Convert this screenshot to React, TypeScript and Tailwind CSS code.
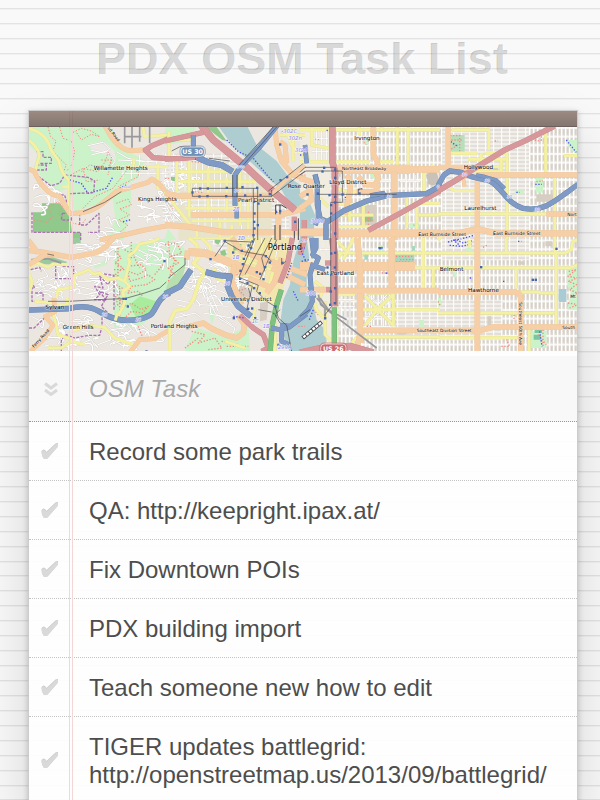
import React from 'react';

type Kind = 'orange' | 'yellow' | 'red' | 'blue' | 'green' | 'white' | 'rail' | 'line' | 'purple' | 'reddot' | 'bluedot';

const ink: Record<Kind, { color: string; casing?: string; dash?: string }> = {
  orange: { color: '#f6cfa6', casing: '#efc598' },
  yellow: { color: '#f4f1a4', casing: '#e3df9c' },
  red: { color: '#d6989b', casing: '#c9888c' },
  blue: { color: '#7f9bc5', casing: '#607ea8' },
  green: { color: '#7fc27f', casing: '#68ab6c' },
  white: { color: '#ffffff', casing: '#d5d1cb' },
  rail: { color: '#99999c' },
  line: { color: '#45464c' },
  purple: { color: '#aa74b0', dash: '9 4' },
  reddot: { color: '#f58a80', dash: '4 5' },
  bluedot: { color: '#4950ed', dash: '4 5' },
};

type Road = [Kind, number, string];
type Area = [string, string];
type Label = [number, number, string, number?, number?];
type Tile = { x: number; y: number; areas: Area[]; roads: Road[]; marks: number[][]; refs?: Label[]; labels: Label[] };

const mint = '#cbf2c9';
const wood = '#91c98d';
const water = '#adcdd0';
const block = '#d6cec2';

const tiles: Tile[] = [
  {
    x: -3,
    y: -6,
    areas: [
      [mint, 'M3 6H250L290 75 350 105 330 160 280 190 230 230 140 260 120 190 80 205 45 160 22 130 3 110Z'],
      [mint, 'M250 200L310 190 310 230 300 290 285 345H240L262 280Z'],
      ['#ebe8e4', 'M185 55L230 50 258 75 265 105 220 85 190 80Z'],
      ['#ebe8e4', 'M3 60L28 85 22 120 3 125Z'],
      [wood, 'M15 262H42V235H95L125 272 132 322H15ZM132 322H158V345H132Z'],
    ],
    roads: [
      ['white', 3, 'M180 62L225 52 245 72 228 84 190 76M190 90L235 78 262 108 245 130M270 105L420 112M285 120V160M310 110V170M335 90V155M360 95V155M385 85V165M405 80V190M280 145H420M265 80L300 100 350 110'],
      ['reddot', 3, 'M60 6L68 35 84 48 75 78 95 100 115 120 105 145M95 6L105 40 130 48 140 80 132 118 115 140M135 22L160 10 190 18 215 35 190 28 160 45 145 22M128 150L165 130 210 140 232 110 240 82 252 100 240 150M165 250L200 215 255 190 285 150 310 120 335 132 330 155 270 185M165 130L175 170 215 165M18 285L60 292 72 275 62 248 90 230 105 245 90 265 115 290 160 300 175 280M265 235L300 222 310 240 275 252 305 270 272 285 300 300 278 320 290 340M160 140L185 120 220 125M220 105L250 105 240 130'],
      ['bluedot', 4, 'M125 165L160 175 180 205 235 190 255 155M275 190L295 180M285 290L310 284'],
      ['purple', 4, 'M25 80H45V97H70V115H32M25 120H55V135H22M20 145L68 182 95 175 110 150 180 157 200 168 197 203 125 206M85 210H110L125 260M12 262V322H158V345M155 265V300L175 300 213 265V322H180M103 265H130V285H100Z'],
      ['yellow', 8, 'M3 10C35 20 55 35 64 60 68 85 85 90 92 108 98 135 110 155 122 165V262M3 45C28 65 40 90 30 105L22 138M345 6L350 35 420 30M300 125H420M390 118V195M318 100V125M125 185H103'],
      ['rail', 5, 'M290 6V55M312 6V68M335 6V50M290 35H340M365 6V55'],
      ['orange', 13, 'M230 0C250 40 270 68 300 76 325 80 340 72 352 76M0 132L18 138C40 185 65 212 95 214L125 265C170 268 200 255 232 228L265 200 360 172 372 162 395 178 420 210M215 345L300 327 350 315 420 302'],
      ['red', 14, 'M420 42L372 62 352 75 375 98 420 101'],
      ['line', 2, 'M165 260L230 232 280 200'],
    ],
    marks: [],
    refs: [[286, 190, '3000', 9]],
    labels: [[197, 135, 'Willamette Heights'], [330, 228, 'Kings Heights'], [238, 10, 'sd Road', 13, 52]],
  },
  {
    x: 408,
    y: -6,
    areas: [
      [mint, 'M0 6H95L60 50 0 60ZM205 6L250 6 200 60ZM8 310L35 345H0Z'],
      ['#e8e4cc', 'M55 110L180 110 270 160 320 215V345H40V240Z'],
      [water, 'M162 6H248L275 60 335 108 370 155 420 190V250L375 240 350 195 310 160 250 105 205 65Z'],
      [wood, 'M122 6H155L185 48 172 45ZM18 155H30V168H18Z'],
      [mint, 'M335 205L370 228 360 240 330 212Z'],
    ],
    roads: [
      ['white', 3, 'M15 65V185M32 90V190M60 110V200M78 110V200M95 115V200M112 115V200M130 115V200M148 120V200M166 130V200M184 145V200M225 165V260M240 150V260M255 150V260M270 165V345M60 225H265M60 240H265M80 285H270M100 215V310M120 215V310M140 215V310M160 215V310M180 215V310M230 280V345M250 280V345M0 225L25 265 50 290M5 245L30 300'],
      ['yellow', 8, 'M0 45H80M12 20V105M35 105V200M72 110V275M130 130V260M185 160V260M30 140H200M45 170H270M60 250H230M225 120V300M165 285V345M95 300V345M0 200L35 248 80 305M200 300V345M250 215V330M360 6L380 60 420 100M385 6V110M345 30H420'],
      ['orange', 13, 'M330 6L335 60 350 110 385 150 420 160M340 90L365 110 360 60 345 50'],
      ['orange', 16, 'M0 205L35 212H320M78 270H345L420 250M0 300L70 305 180 322H420M340 280V345'],
      ['yellow', 6, 'M70 340H280M80 288H260'],
      ['red', 20, 'M108 0L145 45 190 82 245 128 310 188 390 255'],
      ['red', 14, 'M0 48L115 22M0 102L55 100 110 95'],
      ['bluedot', 4, 'M185 45L220 80 265 100 310 155 325 170M90 102L115 106'],
      ['reddot', 3, 'M350 20L375 12M0 160H20M90 200L115 203M80 110L110 112M10 235L25 252'],
      ['blue', 13, 'M338 0L285 65 222 132 210 150V242M85 30V65'],
      ['blue', 17, 'M98 98L130 112 170 120 203 140'],
      ['blue', 11, 'M215 255V280'],
      ['orange', 10, 'M320 208L360 168 420 122'],
      ['line', 2, 'M340 0L228 128M330 0L220 122M203 150V215M216 150V215M82 190H278V345M82 190V214H320L420 138M310 198L415 115M265 190V345M320 195V215M20 78L45 65H75M132 100L195 108'],
      ['line', 3, 'M332 240H350L365 250M332 240V268M345 240V268M330 300V345M345 300V345M388 280V345M400 280V345'],
      ['red', 14, 'M388 275V318M418 285V345'],
    ],
    marks: [[105, 190], [128, 190], [185, 188], [232, 186], [276, 188], [82, 202], [103, 214], [127, 213], [183, 213], [240, 211], [286, 210], [314, 207], [267, 230], [280, 235], [268, 265], [267, 290], [278, 300], [268, 310], [345, 58], [346, 165], [333, 260], [345, 258], [390, 290], [225, 128], [366, 156], [265, 330]],
    refs: [[215, 130, '3020', 9], [355, 25, '302C'], [370, 45, '302n'], [390, 80, '30'], [203, 258, '28'], [218, 345, '2B'], [208, 200, '10', 12]],
    labels: [[219, 232, 'Pearl District']],
  },
  {
    x: 813,
    y: -6,
    areas: [
      [block, 'M70 210H88V258H66ZM180 240H230V300H180Z'],
      ['#f1ece0', 'M0 6H90V345H0Z'],
      [water, 'M0 215L30 235 45 270 40 345H0Z'],
      [wood, 'M190 265H218V290H190Z'],
      [mint, 'M328 295H358V308H328ZM195 45H205V60H195ZM200 130L235 130 245 165 215 160Z'],
      ['#c9c2b8', 'M378 150L392 138 412 144 416 165 402 182 385 178Z'],
    ],
    roads: [
      ['white', 3, 'M50 10V115M65 10V115M80 10V115M35 40H85M35 60H85M35 80H85M120 155V200M160 150V200M180 150V200M120 170H280M320 150V200M345 150V200M300 170H360'],
      ['reddot', 3, 'M12 75H30M45 42L60 45M195 270V295M205 260V300M190 285H220M193 52L200 60M285 98H298M4 150H20M270 195L290 188M340 300L355 302'],
      ['yellow', 8, 'M0 14H90M35 6V60L90 70M15 60L25 110M0 110H85M108 15H420M292 6V120M325 6V125M110 110H210M235 110H280M245 6V20M178 6V30M372 145V205M372 145L400 120M110 190L145 200 150 290M338 235H420M115 238H200M115 270H220M355 270H420M190 240V300M110 305H210M320 205V310M60 220L85 245M350 240V320M145 200H205'],
      ['orange', 15, 'M220 6V88L232 110V122M140 150L152 170 150 200 135 270M175 155L195 178 225 180 235 160 225 135M0 160L35 170 25 200 0 215M0 250L35 225 28 185M170 200H225L235 180'],
      ['orange', 26, 'M105 133H330'],
      ['orange', 18, 'M330 133H420M283 140V345'],
      ['orange', 21, 'M110 325H420M0 322H88'],
      ['red', 18, 'M97 0V110L105 140V345'],
      ['red', 14, 'M205 316L300 265 420 198'],
      ['blue', 14, 'M45 148L52 175V240L60 280 82 290 130 258 200 228 260 212 380 206 425 180M55 225V280L45 300M78 295V345'],
      ['blue', 12, 'M210 212L250 205 245 218M15 60L20 115M45 150L55 185'],
      ['line', 2, 'M0 142L15 127H107V345M0 150L18 138H127V232H92V345M50 208H290M175 208V192H188'],
      ['bluedot', 4, 'M0 90H10M80 15L86 20M175 195L185 190M136 215V225'],
    ],
    marks: [[72, 128], [67, 139], [105, 133], [105, 158], [127, 208], [88, 210], [105, 215], [22, 208], [105, 232], [93, 265], [105, 325], [93, 240], [178, 205], [53, 205]],
    refs: [[32, 293, '3008'], [2, 80, '24'], [260, 218, '30', 12], [410, 190, '0', 12]],
    labels: [[163, 45, 'Irvington'], [126, 136, 'Northeast Broadway', 13], [88, 177, 'Lloyd District'], [-37, 190, 'Rose Quarter'], [355, 332, 'East Burnside Street', 14]],
  },
  {
    x: 1227,
    y: -6,
    areas: [
      ['#b6dfbc', 'M36 30H80V80H36Z'],
      [mint, 'M383 45H420V88L398 75ZM293 158H315V203H293ZM230 196H258V208H230Z'],
      [block, 'M295 208H345V230H295ZM150 125H180V135H150Z'],
    ],
    roads: [
      ['reddot', 4, 'M36 32H60M40 45H75M65 30V80M40 72L60 60M295 170L315 168M310 25V50M290 45L305 48M170 48H180'],
      ['bluedot', 4, 'M38 50L60 65M385 45L415 82M292 178H312M235 202H245'],
      ['yellow', 8, 'M42 15H152V75M40 85H120M140 85H208M90 103H208M130 85V110M190 103V140H110M207 85V345M323 6V145M0 267H325M350 155V345M378 92H420M33 175L38 190 50 197H110M110 125H185M0 345L20 325'],
      ['orange', 14, 'M30 0V130M0 127H105M115 150H420M118 150V345'],
      ['orange', 14, 'M325 267H420'],
      ['orange', 17, 'M0 325H60L118 312 175 325H420'],
      ['orange', 10, 'M85 137L75 155 80 185'],
      ['blue', 14, 'M0 182L18 150 35 138 70 142 100 155 155 168C195 190 205 235 255 250 320 262 350 228 420 178'],
      ['blue', 9, 'M115 150L140 155 175 165 200 190'],
      ['red', 15, 'M0 198L50 168 110 130 200 75 260 48 350 3'],
      ['bluedot', 4, 'M75 340L105 332M50 345L70 342'],
    ],
    marks: [],
    refs: [[72, 152, '30', 12], [140, 170, '30', 12], [207, 218, '30', 12], [290, 258, '30', 12]],
    labels: [[77, 131, 'Hollywood'], [79, 256, 'Laurelhurst'], [165, 331, 'East Burnside Street', 14], [388, 272, 'Nort', 13]],
  },
  {
    x: -3,
    y: 333,
    areas: [
      ['#9bc9a0', 'M20 62L75 58 118 72 105 82 40 78ZM135 0H158V18H135Z'],
      [mint, 'M258 35L300 20 420 0V150L385 180 372 235 330 270H258ZM198 85L240 60 235 80 200 92Z'],
      ['#a9ec9d', 'M335 175L385 190 375 225 325 240 305 200Z'],
    ],
    roads: [
      ['white', 3, 'M10 100L45 90 60 115 30 125 50 145 15 150M85 85L120 90 125 120M140 30L190 25 220 40M150 75L180 85 220 75M270 120L250 140M325 15L380 10 410 25M330 35L370 55 345 75 400 80M320 50L355 70M150 130L190 130M150 145L195 155M145 165L210 175M25 170L40 155 70 160 100 175M290 255L320 285M10 235L40 250M130 250L180 250M225 250L250 275 290 270M210 320L250 305 280 320M150 320L190 305 200 325M340 260L365 280M155 235L190 228'],
      ['reddot', 4, 'M262 40L280 60 260 75 285 90 262 110 280 125M270 30V115M258 95H300M300 85L340 80 355 95 330 110 300 100 305 130 340 120 360 110 380 125 355 140 310 145 300 165 330 160 345 175M265 140L290 155 262 175 285 190 262 205M275 150V240M265 190L295 205 310 195 340 215 360 205 345 225 310 220 290 240M330 265L345 300 325 310M310 12V60L300 80M290 35L315 50 335 90M380 110L405 80'],
      ['purple', 4, 'M83 80V122H137V86H100M8 95L35 88 40 100M10 130L20 150H12V190H45V165H20M228 108L258 112 240 140 215 115 225 150 200 145 215 170 200 185 235 188 215 160 240 170 220 205 240 225M258 115V215M135 215L165 206 222 225V265L215 292H185L140 300M3 270H18L55 235M100 340V305L115 290 140 300'],
      ['yellow', 8, 'M3 90L25 74 60 88 75 78 120 80M3 108L12 130 5 160M85 180L90 155 135 148 140 112 165 103 182 95 195 108 215 105 240 125 270 120 290 130 300 90 305 70 300 60M300 55L320 40 335 18 375 10 395 0M290 130L305 145 285 160 290 195 275 225 262 247M75 225L85 265 90 290 135 305M130 280L180 262 230 268 260 300 320 322M60 330H100L130 310 170 320M20 190L75 195M118 180V200L70 205'],
      ['rail', 6, 'M10 65L60 62 100 75'],
      ['orange', 14, 'M3 38L40 42 130 58 205 44 235 25 255 0M3 80L35 60 60 45M0 6L30 45'],
      ['orange', 12, 'M78 180L80 222 52 235 75 262 50 300 8 340M305 345L335 305 380 302 425 275'],
      ['blue', 15, 'M0 216L120 212C170 200 195 208 222 225 270 255 330 252 365 232 385 220 385 180 425 165'],
      ['yellow', 7, 'M262 247L268 225'],
      ['line', 2, 'M60 190H120L230 184 290 182 350 165 395 150 415 132M58 48L78 52'],
    ],
    marks: [[286, 182], [293, 182], [299, 205], [409, 69], [355, 340]],
    refs: [[222, 235, '26', 12], [323, 250, '26', 12], [405, 180, '26', 12]],
    labels: [[52, 213, 'Sylvan'], [104, 274, 'Green Hills'], [368, 270, 'Portland Heights'], [18, 330, 'Ferry Road', 13, -48]],
  },
  {
    x: 408,
    y: 333,
    areas: [
      ['#f3e5ae', 'M185 0H385L375 90 340 190 280 170 190 100Z'],
      [mint, 'M0 0L55 25 65 60 30 140 0 170ZM130 215L155 220 140 260ZM100 270L180 300 250 260 255 340H60L80 290Z'],
      ['#b9dfae', 'M40 100L65 70 50 130 0 165 10 130Z'],
      [wood, 'M148 0L168 5 160 20 150 15ZM165 40L180 35 185 50 170 58ZM205 20L230 18 225 35 205 38Z'],
      [water, 'M405 0H430V345H375L345 260 355 185 375 140 385 70Z'],
      [block, 'M210 140L240 145 260 170 240 190 205 170ZM285 195L310 190 305 245 285 250Z'],
    ],
    roads: [
      ['white', 3, 'M60 85L100 90M70 65V110M85 60V120M60 120L90 125M45 150L75 165M30 185L80 195 110 150M35 200L75 210M50 140L95 160M130 150L160 220M115 150L150 225 200 260M110 180L160 180M105 200L190 205M115 225L200 240M140 150L180 165 200 190M30 240L90 225 110 240M25 260L60 245M160 240L210 270 205 285M190 215L215 245M45 225L70 235M120 130L110 165M20 290L50 270M100 255L150 270M130 75L160 90M120 30L140 50M290 0V40M250 10L235 60M270 10L250 70M310 65L295 120M335 40L325 100'],
      ['reddot', 4, 'M0 20L35 15 50 45 20 55 40 75 10 90 30 110M5 40L30 65 10 130M80 280L120 290 100 315 150 300 170 330 130 335M60 330L100 300M185 325H250M215 150L240 175M205 165L245 150M400 265H420M170 310L220 320M10 10L15 60M205 110H225'],
      ['yellow', 10, 'M72 0L95 20 100 60 85 75 120 105 105 125 85 185 65 212 30 218 15 250V340'],
      ['yellow', 8, 'M120 108L150 95 155 120 185 135 200 165 215 190M110 0L135 25 140 55M225 60L360 110M260 0L235 110M300 0L265 130M335 60L310 150M275 180L340 195M330 250V340M270 210L265 250M180 310L240 330'],
      ['orange', 22, 'M70 42L120 45 200 75 290 110M215 90L240 105M300 50L275 110'],
      ['orange', 15, 'M65 65L68 38M200 0L230 40 360 85 425 110M350 60L330 130 305 165M250 120L320 150M208 80L200 130 230 200M320 90L420 140M65 268L115 255 140 272 180 290 215 300 235 285 238 260 220 232'],
      ['red', 14, 'M382 0L368 75 345 135M225 232L265 270 295 290 310 330 290 340M420 0L405 50'],
      ['green', 14, 'M349 155L335 200 322 260 315 345'],
      ['blue', 16, 'M122 102L160 112 195 115 188 145 200 175 220 205 258 235M0 168L45 145 78 95'],
      ['blue', 13, 'M318 270L345 275 372 268 425 228M350 275V310L372 320M375 265L345 262'],
      ['line', 2, 'M150 55L182 8 258 12 255 25 240 55M175 8L230 40 300 52 320 70M270 0L222 118 280 142 275 160 305 190 330 205 340 240 365 262 380 340M300 0L240 110M320 0L290 60 300 100M335 5L285 125M222 130L262 145 245 215M250 150L262 190M10 120L60 80 60 60M350 60V80L362 70M345 215L330 230 345 255M280 215L320 222'],
      ['bluedot', 4, 'M365 120L380 75M325 225L335 235M400 30H420M205 235L240 240M385 160L400 190'],
    ],
    marks: [[136, 63], [179, 8], [204, 43], [230, 38], [250, 22], [258, 30], [262, 10], [236, 62], [226, 98], [285, 107], [295, 123], [275, 102], [302, 54], [314, 73], [233, 78], [331, 20], [352, 74], [300, 87], [225, 122], [267, 150], [247, 135], [284, 165], [249, 212], [261, 211], [270, 240], [331, 205], [340, 320], [206, 240]],
    refs: [[202, 62, '1B'], [218, 6, '1D'], [178, 142, '26', 13], [260, 255, '1C'], [293, 270, '1B'], [338, 332, '299A']],
    labels: [[308, 37, 'Portland', 25], [168, 190, 'University District']],
  },
  {
    x: 813,
    y: 333,
    areas: [
      ['#f1ece0', 'M20 0H95V330H50L20 200Z'],
      [water, 'M0 0H20L28 60 15 95 18 160 40 200 50 245 75 275 80 310 60 345H0Z'],
      ['#a8d8bd', 'M285 48H343V75H285ZM335 24H345V38H335ZM193 48H204V65H193Z'],
      [mint, 'M357 245H372V268H357ZM235 22H250V38H235Z'],
      [block, 'M290 275H320V290H290Z'],
    ],
    roads: [
      ['white', 3, 'M60 10V60M78 10V60M60 35H90M55 175L85 215M120 170V280M135 170V280M150 170V280M110 185H165M110 205H165M195 215L235 215 235 170M215 170V270M250 170V265M265 175V260M195 195H280M195 235H280M195 180L275 262M205 170L280 245M275 185L200 262M262 170L195 235M205 265H270'],
      ['reddot', 4, 'M288 55H340M300 65H342M288 72H330M245 105H265M100 195H120M200 265H215M235 28H250M175 38L185 36M40 215L55 230'],
      ['bluedot', 4, 'M235 30H250M0 30L20 75M5 70L30 65M258 105L270 108M28 245L40 215M30 160L45 158'],
      ['yellow', 8, 'M110 45H420M370 0V150M113 10L140 40 160 6M110 185V320M115 170H165M125 45L110 65M195 172L232 214 280 262M278 172L232 214 195 262M190 215H420M280 165V265M190 297H420M345 90H420M400 90V150M45 130L70 150 60 180M155 315L175 295M75 190V290L95 310M40 180L50 215 70 240M160 0L130 65M205 165H280'],
      ['orange', 24, 'M0 85H50M110 85H345'],
      ['orange', 17, 'M172 0L180 85V315M275 0V160'],
      ['orange', 15, 'M0 155H90M108 158H420M190 277H420M180 290L170 335'],
      ['rail', 5, 'M55 170L62 200 110 238 230 330M60 180L85 215 140 245M50 180L75 210V235'],
      ['red', 19, 'M97 0L104 50V205'],
      ['red', 20, 'M0 345L60 332 150 325 220 345'],
      ['red', 13, 'M78 155H95M75 75H95'],
      ['green', 14, 'M103 208V318'],
      ['blue', 13, 'M48 0V30L38 50 55 60 45 85 75 95M40 75L30 110 37 190 25 215 0 240M35 0L42 60M30 145L42 180'],
      ['line', 2, 'M92 0V200M108 0V200M95 205L75 230V245M30 215L0 235'],
      ['line', 12, 'M8 300L65 252'],
    ],
    marks: [[93, 46], [105, 44], [82, 88], [104, 88], [93, 110], [105, 150], [92, 160], [104, 195], [90, 200], [75, 240], [240, 30]],
    refs: [[18, 170, '300'], [5, 12, '29', 12, 60]],
    labels: [[50, 112, 'East Portland'], [350, 282, 'Southeast Division Street', 13]],
  },
  {
    x: 1227,
    y: 333,
    areas: [
      ['#a9cbd4', 'M362 153H385V192H362Z'],
      [mint, 'M385 95L420 88V215H388L398 165 388 140ZM275 278H325V330H275ZM85 30H100V38H85ZM45 100H55V118H45ZM0 180H10V205H0Z'],
      ['#7cc5a0', 'M290 275H312V285H290ZM287 290H308V305H287Z'],
      [block, 'M322 10H342V25H322ZM148 235H160V262H148ZM240 70H260V80H240Z'],
    ],
    roads: [
      ['reddot', 4, 'M392 100L415 95 390 115 418 120 392 130 415 140 395 155 418 165 395 180M390 195L420 200 395 210M315 275V325M190 325H215L205 305M228 230V250M0 190L8 205M135 28L150 20M300 290L325 320M270 280V325'],
      ['bluedot', 4, 'M30 12L55 5 75 15 105 8M35 22L70 25 100 18M45 5L65 22M283 125H298M95 120H100M305 280L312 325M195 130H202M240 10H250'],
      ['yellow', 8, 'M0 45H382L400 35 405 10 420 5M0 90H395L420 80M205 0V45M350 0V30L355 60V260M235 90V152M0 225H350M245 162H300L310 165H355M0 299H240M273 275V345M95 6V30'],
      ['orange', 15, 'M118 0V340M0 162H230Q248 162 248 185V345M0 277H130L165 267H420'],
      ['line', 3, 'M283 125H288'],
    ],
    marks: [[129, 87], [284, 125], [293, 125], [355, 32]],
    labels: [[5, 98, 'Belmont'], [90, 161, 'Hawthorne'], [243, 193, 'Southeast 50th Ave', 13, 90], [373, 274, 'South', 13], [397, 180, 'Mt', 13]],
  },
];

/* Small side streets of the hilly western districts. */
function hillStreets(): string {
  let seed = 11;
  const next = (span: number) => {
    seed = (seed * 1103515245 + 12345) % 2147483648;
    return Math.floor((seed / 2147483648) * span);
  };
  const boxes = [
    [10, 170, 90, 70], [170, 270, 80, 110], [310, 160, 110, 120], [20, 430, 220, 90],
    [20, 570, 330, 90], [470, 390, 160, 150], [130, 340, 120, 60], [320, 340, 110, 90], [420, 90, 60, 150],
  ];
  return boxes
    .map(([x, y, w, h]) =>
      Array.from({ length: Math.round((w * h) / 650) }, () => {
        const a = x + next(w);
        const b = y + next(h);
        return `M${a} ${b}q${next(30)} ${next(30) - 22} ${next(36) + 6} ${next(20) - 8}t${next(24) - 12} ${next(24)}`;
      }).join(''),
    )
    .join('');
}

function RoadLine({ road }: { road: Road }) {
  const [kind, width, d] = road;
  const { color, casing, dash } = ink[kind];
  return (
    <g fill="none" strokeLinejoin="round">
      {casing && <path d={d} stroke={casing} strokeWidth={width + 2} />}
      <path d={d} stroke={color} strokeWidth={width} strokeDasharray={dash} />
    </g>
  );
}

function Shield({ x, y, width, color, children }: { x: number; y: number; width: number; color: string; children: string }) {
  return (
    <g>
      <rect x={x} y={y} width={width} height="28" rx="11" fill={color} stroke="#fff" strokeWidth="2" />
      <rect x={x - 3} y={y - 3} width={width + 6} height="34" rx="13" fill="none" stroke={color} strokeWidth="2" />
      <text x={x + width / 2} y={y + 21} textAnchor="middle" fontSize="19" fontWeight="bold" fill="#fff">
        {children}
      </text>
    </g>
  );
}

function PortlandMap() {
  return (
    <svg
      viewBox="0 0 1644 672"
      preserveAspectRatio="xMidYMid slice"
      role="img"
      aria-label="Map of Portland"
      className="block h-56 w-full bg-[#ebe7e0] font-['DejaVu_Sans',sans-serif]"
    >
      <defs>
        <pattern id="blocks" width="12" height="26" patternUnits="userSpaceOnUse">
          <rect width="12" height="26" fill="#e0dcd5" />
          <path d="M2 0V26M0 3H12" stroke="#fff" strokeWidth="4" />
          <path d="M8 8V22" stroke="#d3cec6" strokeWidth="3" />
        </pattern>
        <pattern id="blocks-wide" width="24" height="12" patternUnits="userSpaceOnUse">
          <rect width="24" height="12" fill="#e3dfd8" />
          <path d="M2 0V12M0 3H24" stroke="#fff" strokeWidth="3" />
        </pattern>
      </defs>
      <rect x="900" width="744" height="672" fill="url(#blocks)" />
      <path d="M1240 0H1500V400H1240ZM1100 520H1420V640H1100Z" fill="url(#blocks-wide)" />
      <path d="M400 80H600L780 230V400H620L480 300 400 280Z" fill="url(#blocks-wide)" />
      {tiles.map((t, i) => (
        <g key={i} transform={`translate(${t.x} ${t.y})`}>
          {t.areas.map(([fill, d], n) => (
            <path key={n} d={d} fill={fill} />
          ))}
        </g>
      ))}
      <path d={hillStreets()} fill="none" stroke="#cbc7c2" strokeWidth="6" />
      <path d={hillStreets()} fill="none" stroke="#fff" strokeWidth="4" />
      {tiles.map((t, i) => (
        <g key={i} transform={`translate(${t.x} ${t.y})`}>
          {t.roads.map((road, n) => (
            <RoadLine key={n} road={road} />
          ))}
          {t.marks.map(([x, y], n) => (
            <rect key={n} x={x - 3} y={y - 3} width="7" height="7" fill="#4565ad" />
          ))}
        </g>
      ))}
      <path d="M823 631L876 587" stroke="#fff" strokeWidth="7" strokeDasharray="9 3" />
      <Shield x={456} y={60} width={70} color="#6e90b5">US 30</Shield>
      <Shield x={875} y={651} width={76} color="#c9686e">US 26</Shield>
      {tiles.map((t, i) => (
        <g key={i} transform={`translate(${t.x} ${t.y})`} stroke="#fff" strokeLinejoin="round" paintOrder="stroke">
          {t.refs?.map(([x, y, text, size = 16], n) => (
            <text key={n} x={x} y={y} fontSize={size} fill="#8585ee" strokeWidth="3" strokeOpacity="0.8" fontStyle="italic">
              {text}
            </text>
          ))}
          {t.labels.map(([x, y, text, size = 17, turn = 0], n) => (
            <text key={n} x={x} y={y} fontSize={size} fill="#000" strokeWidth="3" strokeOpacity="0.5" transform={`rotate(${turn} ${x} ${y})`}>
              {text}
            </text>
          ))}
        </g>
      ))}
    </svg>
  );
}

const lineOffsets = [8, 23, 38, 53, 68, 83, 98, 113, 127, 142, 157, 172, 187, 202, 217];

function RuledPaper() {
  return (
    <svg aria-hidden="true" className="absolute inset-0 -z-10 h-full w-full">
      <defs>
        <pattern id="ruled" width="40" height="224" patternUnits="userSpaceOnUse">
          <rect width="40" height="224" fill="#f9f9f9" />
          {lineOffsets.map((y) => (
            <g key={y}>
              <rect y={y} width="40" height="1" fill="#e3e3e3" />
              <rect y={y + 1} width="40" height="1" fill="#f1f1f1" />
            </g>
          ))}
        </pattern>
      </defs>
      <rect width="100%" height="100%" fill="url(#ruled)" />
    </svg>
  );
}

function Task({ id, children }: { id: string; children: React.ReactNode }) {
  return (
    <li className="flex items-center border-b border-dotted border-[#c4c4c4]">
      <span className="grid w-[45px] shrink-0 place-items-center pr-1">
        <input id={id} type="checkbox" className="col-start-1 row-start-1 size-8 appearance-none" />
        <svg viewBox="0 0 18 18" aria-hidden="true" className="pointer-events-none col-start-1 row-start-1 size-[18px]">
          <path d="M.5 9 2.500 7.500 4 8 5.500 10 14.500 1.500 17 1V4.500L6.500 16.500 3 17 1 13Z" fill="#c8c8c8" />
          <path d="M.5 10 2.500 8.300 4 8.700 5.500 10.700 14.700 2.200 17 1.700V4.500L6.500 16.500 3 17 1 14Z" fill="#d9d9d9" />
        </svg>
      </span>
      <label htmlFor={id} className="min-w-0 flex-1 pt-4 pb-3.5 pl-[15px] leading-[28px]">
        {children}
      </label>
    </li>
  );
}

export default function App() {
  return (
    <main className="relative isolate h-screen overflow-hidden pr-[22px] pl-7 font-['Liberation_Sans',Arial,sans-serif] text-2xl text-[#4d4d4d]">
      <RuledPaper />
      <h1 className="pt-[30px] pb-5 text-center text-[45px] leading-[60px] font-bold text-[rgba(255,255,255,0.3)] [text-shadow:-1px_-1px_rgba(0,0,0,0.2)]">
        PDX OSM Task List
      </h1>
      <section className="relative border border-[#ccc] bg-white/90 shadow-[0_2px_6px_0_rgba(0,0,0,0.2),0_25px_50px_0_rgba(0,0,0,0.15)]">
        <div aria-hidden="true" className="pointer-events-none absolute inset-y-0 left-10 z-10 w-1 border-x border-[#f5d6d6]" />
        <div className="relative z-20 h-4 border-b border-[#6c615c] bg-linear-to-b from-[#846e64]/80 to-[#65544c]/80" />
        <PortlandMap />
        <div className="mt-[5px] flex h-[66px] items-center border-b border-dotted border-[#999] bg-[#f8f8f8]">
          <span className="grid w-[45px] shrink-0 place-items-center pr-0.5">
            <input type="checkbox" aria-label="Mark all as complete" className="col-start-1 row-start-1 size-8 appearance-none" />
            <svg viewBox="0 0 14 14" aria-hidden="true" className="pointer-events-none col-start-1 row-start-1 size-3.5">
              <path d="M1 1.500 7 6 13 1.500M1 8 7 12.500 13 8" fill="none" stroke="#d9d9d9" strokeWidth="3" />
            </svg>
          </span>
          <input
            type="text"
            aria-label="OSM Task"
            placeholder="OSM Task"
            className="h-full min-w-0 flex-1 bg-transparent pl-[15px] outline-none placeholder:text-[#a9a9a9] placeholder:italic"
          />
        </div>
        <ul>
          <Task id="trails">Record some park trails</Task>
          <Task id="qa">QA: http://keepright.ipax.at/</Task>
          <Task id="pois">Fix Downtown POIs</Task>
          <Task id="import">PDX building import</Task>
          <Task id="teach">Teach someone new how to edit</Task>
          <Task id="tiger">
            TIGER updates battlegrid:
            <br />
            http://openstreetmap.us/2013/09/battlegrid/
          </Task>
        </ul>
      </section>
    </main>
  );
}
